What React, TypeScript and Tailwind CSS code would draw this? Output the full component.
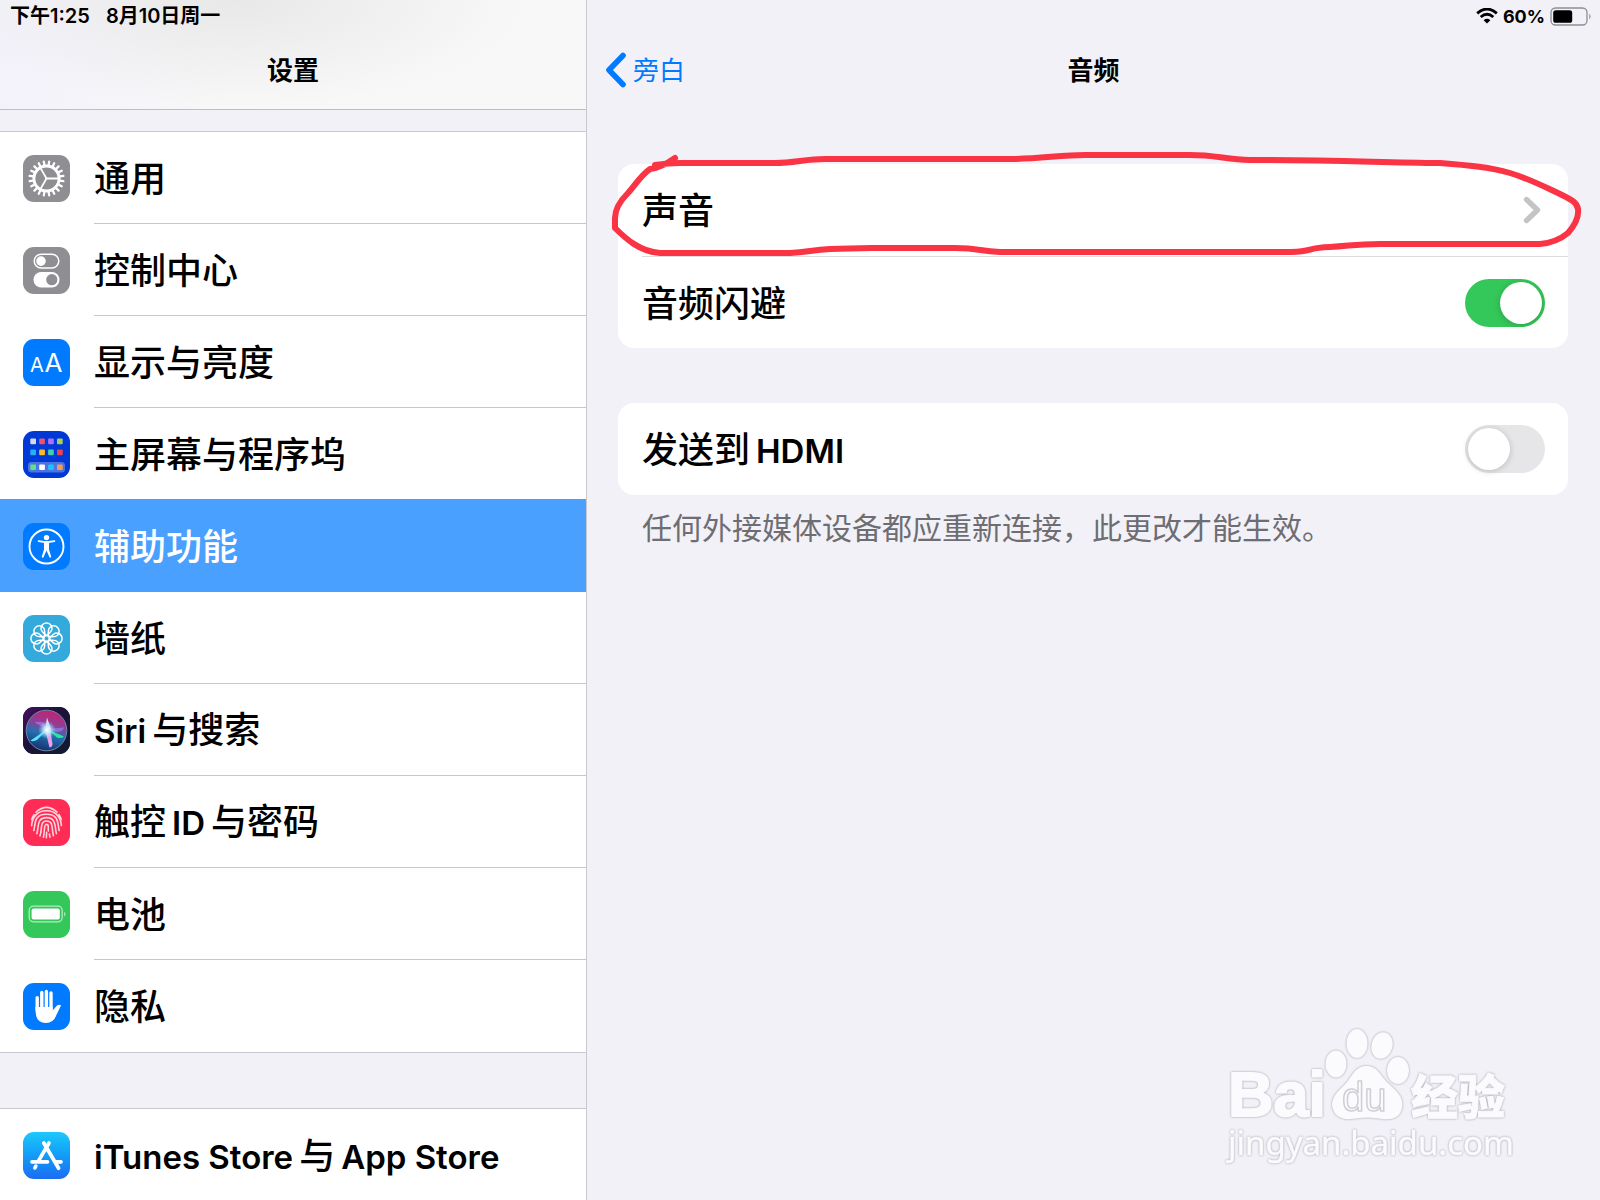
import type { ReactNode } from 'react'
import clsx from 'clsx'

interface IconTileProps {
    className: string
    children: ReactNode
}

interface SettingItem {
    label: string
    icon: ReactNode
    active?: boolean
}

function IconTile({ className, children }: IconTileProps) {
    return (
        <span className={clsx('block size-[47px] rounded-[11px] overflow-hidden', className)}>
            <svg viewBox="0 0 47 47" className="size-full" fill="none" aria-hidden="true">
                {children}
            </svg>
        </span>
    )
}

const around = (count: number) => Array.from({ length: count }, (_, i) => (i * 360) / count)

function GearIcon() {
    return (
        <IconTile className="bg-[#8e8e93]">
            <g stroke="#fff" strokeLinecap="round">
                <circle cx="23.5" cy="23.5" r="12.6" strokeWidth="3" />
                {around(20).map((a) => (
                    <path key={a} d="M36.5 23.5H40.6" strokeWidth="2.3" transform={`rotate(${a + 9} 23.5 23.5)`} />
                ))}
                {around(3).map((a) => (
                    <path key={a} d="M23.5 23.5H36" strokeWidth="1.8" transform={`rotate(${a} 23.5 23.5)`} />
                ))}
            </g>
        </IconTile>
    )
}

function ControlCenterIcon() {
    return (
        <IconTile className="bg-[#8e8e93]">
            <rect x="11.2" y="7.2" width="24.6" height="13.8" rx="6.9" stroke="#fff" strokeWidth="1.5" />
            <circle cx="18" cy="14.1" r="4.8" fill="#fff" />
            <rect x="10.5" y="25" width="26" height="15.4" rx="7.7" fill="#fff" />
            <circle cx="28.8" cy="32.7" r="5.6" fill="#8e8e93" />
        </IconTile>
    )
}

function DisplayIcon() {
    return (
        <IconTile className="bg-[#007aff]">
            <g fill="#fff" fontFamily="Inter, sans-serif">
                <text x="7" y="33" fontSize="20">A</text>
                <text x="21.5" y="33" fontSize="26">A</text>
            </g>
        </IconTile>
    )
}

const appColors = [
    ['#d5dbe6', '#f0506e', '#b070f8', '#a6d05a'],
    ['#1fb4f5', '#fdbb1c', '#3fd0b0', '#f04444'],
    ['#5fe37c', '#ffffff', '#1cc4f8', '#f99a4c'],
]

function HomeScreenIcon() {
    return (
        <IconTile className="bg-[#0039d6]">
            <rect x="5" y="31" width="37" height="10.5" rx="3.5" fill="#4c74e4" />
            {appColors.map((row, r) =>
                row.map((color, c) => (
                    <rect key={color} x={7.3 + c * 8.9} y={[7.6, 18.6, 33.4][r]} width="5.7" height="5.7" rx="1" fill={color} />
                )),
            )}
        </IconTile>
    )
}

function AccessibilityIcon() {
    return (
        <IconTile className="bg-[#007aff]">
            <circle cx="23.5" cy="23.5" r="17" stroke="#fff" strokeWidth="1.9" />
            <circle cx="23.5" cy="14.6" r="2.7" fill="#fff" />
            <path d="M15.6 18.2 21.4 19H25.6L31.4 18.2" stroke="#fff" strokeWidth="1.8" strokeLinecap="round" />
            <path d="M21 18.6H26V26.5L28.2 33.6Q28 35.2 26.6 34.4L23.5 27.5 20.4 34.4Q19 35.2 18.8 33.6L21 26.5Z" fill="#fff" />
        </IconTile>
    )
}

function WallpaperIcon() {
    return (
        <IconTile className="bg-[#34aadc]">
            <g stroke="#fff" strokeWidth="1.5">
                {around(8).map((a) => (
                    <path
                        key={a}
                        d="M23.5 20.6C21.5 18.9 18 16.6 18 13.4A5.5 5.5 0 0 1 29 13.4C29 16.6 25.5 18.9 23.5 20.6Z"
                        transform={`rotate(${a} 23.5 23.5)`}
                    />
                ))}
                <circle cx="23.5" cy="23.5" r="2.9" />
            </g>
        </IconTile>
    )
}

function SiriIcon() {
    return (
        <IconTile className="bg-[#16133a]">
            <defs>
                <linearGradient id="siri-bg" x1="0" y1="0" x2="1" y2="1">
                    <stop offset="0" stopColor="#46105f" />
                    <stop offset=".45" stopColor="#1c1238" />
                    <stop offset="1" stopColor="#101c30" />
                </linearGradient>
                <linearGradient id="siri-orb" x1=".65" y1="0" x2=".4" y2="1">
                    <stop offset="0" stopColor="#c81f6c" />
                    <stop offset=".35" stopColor="#8d4098" />
                    <stop offset=".6" stopColor="#2470b0" />
                    <stop offset="1" stopColor="#17306e" />
                </linearGradient>
                <radialGradient id="siri-glow">
                    <stop offset="0" stopColor="#fff" />
                    <stop offset=".4" stopColor="#c8f4ff" stopOpacity=".8" />
                    <stop offset="1" stopColor="#7fd8ff" stopOpacity="0" />
                </radialGradient>
            </defs>
            <rect width="47" height="47" fill="url(#siri-bg)" />
            <circle cx="23.5" cy="23.5" r="20.3" fill="url(#siri-orb)" stroke="#6f8aa8" strokeWidth="1" />
            <path d="M24 22 41 29.5Q38 32 34 30.500Z" fill="#2fe0a4" />
            <path d="M24 22 41 20.5Q40 25 33 25Z" fill="#8c7ae8" opacity=".8" />
            <path d="M26 21 7.5 33.5Q10 35 14 33Z" fill="#5ae2ff" />
            <path d="M24 22 11.5 15.5Q20 13 27 20Z" fill="#b06ad8" opacity=".8" />
            <path d="M22 22 26.500 40.500Q29.500 40 29.500 37L27 22Z" fill="#f0a0e8" />
            <path d="M22 23 24 10.500 28 22Z" fill="#fff" opacity=".8" />
            <circle cx="24" cy="23" r="9" fill="url(#siri-glow)" />
        </IconTile>
    )
}

function TouchIdIcon() {
    return (
        <IconTile className="bg-[#ff2d55]">
            <g stroke="#ffd5dd" strokeWidth="1.6" strokeLinecap="round">
                <path d="M13 13.2Q23.5 3.6 34 13.2" />
                <path d="M8.8 20.5Q9.4 18 11 15.7M38.2 20.5Q37.6 18 36 15.7" />
                <path d="M8.6 26.8C9 19 13.5 11.8 23.5 11.8S38 19 38.4 26.8" />
                <path d="M10.8 31.5C12.6 25 10.6 15.2 23.5 15.2S34.4 25 36.2 31.5" />
                <path d="M13.8 34.6C16 29 13.2 18.6 23.5 18.6S31.8 29 33.4 34.6" />
                <path d="M17 36.8C19.4 31 16.6 22 23.5 22S28.4 28 30.4 36.6" />
                <path d="M20.4 38.2C22 33 20.4 25.4 23.5 25.4S24.6 29 25.4 32M26.4 35 27 38.2M23.6 33.4 23.4 38.8" />
            </g>
        </IconTile>
    )
}

function BatteryTileIcon() {
    return (
        <IconTile className="bg-[#34c759]">
            <rect x="6.2" y="15.2" width="33" height="15.6" rx="4.2" stroke="#b4ebc1" strokeWidth="1.3" />
            <rect x="8.6" y="17.6" width="28.2" height="10.8" rx="2" fill="#fff" />
            <path d="M41.2 20.4Q43.8 23 41.2 25.6Z" fill="#b4ebc1" />
        </IconTile>
    )
}

function PrivacyIcon() {
    return (
        <IconTile className="bg-[#007aff]">
            <g stroke="#fff" strokeWidth="3.4" strokeLinecap="round">
                <path d="M14.2 14.6V28M18.8 9.4V26M23.4 8.4V26M28 10V26" />
            </g>
            <path
                d="M12.5 24H29.7V27.4L34 22.6Q36.6 20.8 38 22.6L33.4 32Q30.6 40 23 40 13.6 40 12.8 30.6Z"
                fill="#fff"
            />
        </IconTile>
    )
}

function AppStoreIcon() {
    return (
        <IconTile className="bg-linear-to-b from-[#1fc8fb] to-[#1d6cf2]">
            <g stroke="#fff" strokeWidth="3.7" strokeLinecap="round">
                <path d="M26 11 15.8 28.4M12.8 34.2 11.9 35.8M20.8 11 35.6 36.2" />
                <path d="M9 29.8H24.5M32.6 29.8H38" />
            </g>
        </IconTile>
    )
}

const mainItems: SettingItem[] = [
    { label: '通用', icon: <GearIcon /> },
    { label: '控制中心', icon: <ControlCenterIcon /> },
    { label: '显示与亮度', icon: <DisplayIcon /> },
    { label: '主屏幕与程序坞', icon: <HomeScreenIcon /> },
    { label: '辅助功能', icon: <AccessibilityIcon />, active: true },
    { label: '墙纸', icon: <WallpaperIcon /> },
    { label: 'Siri与搜索', icon: <SiriIcon /> },
    { label: '触控ID与密码', icon: <TouchIdIcon /> },
    { label: '电池', icon: <BatteryTileIcon /> },
    { label: '隐私', icon: <PrivacyIcon /> },
]

const storeItems: SettingItem[] = [{ label: 'iTunes Store与App Store', icon: <AppStoreIcon /> }]

// Latin runs are set a little smaller and heavier than the Chinese around them
function MixedText({ text }: { text: string }) {
    return (
        <span className="pt-[2px] flex items-baseline gap-[6px] text-[36px] leading-[44px] font-medium whitespace-nowrap">
            {text
                .split(/([A-Za-z ]+)/)
                .filter(Boolean)
                .map((part) => (
                    <span key={part} className={clsx(/[A-Za-z]/.test(part) && 'text-[33px] font-semibold')}>
                        {part}
                    </span>
                ))}
        </span>
    )
}

function SettingRow({ label, icon, active }: SettingItem) {
    return (
        <li className="group">
            <a
                href="#"
                aria-current={active ? 'page' : undefined}
                className={clsx('flex items-center', active && 'relative -mt-px pt-px bg-[#4aa0ff] text-white')}
            >
                <span className="w-[94px] shrink-0 pl-[23px]">{icon}</span>
                <span
                    className={clsx(
                        'flex-1 h-[92px] flex items-center border-b group-last:border-b-0',
                        active ? 'border-transparent' : 'border-[#c9c9cd]',
                    )}
                >
                    <MixedText text={label} />
                </span>
            </a>
        </li>
    )
}

function SettingGroup({ items }: { items: SettingItem[] }) {
    return (
        <ul className="bg-white border-y border-[#c9c9cd]">
            {items.map((item) => (
                <SettingRow key={item.label} {...item} />
            ))}
        </ul>
    )
}

function Switch({ id, defaultChecked }: { id: string; defaultChecked?: boolean }) {
    return (
        <input
            id={id}
            type="checkbox"
            role="switch"
            defaultChecked={defaultChecked}
            className="appearance-none flex items-center w-20 h-12 px-[3px] rounded-full bg-[#e6e6e8] checked:bg-[#34c759] checked:justify-end before:block before:size-[42px] before:rounded-full before:bg-white before:shadow-[0_1px_6px_rgba(0,0,0,0.2)]"
        />
    )
}

function StatusIndicators() {
    return (
        <div className="h-8 pr-2 flex items-center justify-end gap-[5px] text-[18px] font-bold">
            <svg width="22" height="16" viewBox="0 0 22 16" fill="none" stroke="#000" strokeWidth="2.9" aria-hidden="true">
                <path d="M1.200 5.400Q11-3.200 20.800 5.400" />
                <path d="M4.700 9Q11 3.600 17.300 9" />
                <path d="M11 15.600 7.600 12.200Q11 9.400 14.400 12.200Z" fill="#000" stroke="none" />
            </svg>
            <span>60%</span>
            <svg width="42" height="19" viewBox="0 0 42 19" fill="none" aria-hidden="true">
                <rect x="1" y="1" width="36" height="17" rx="4.5" stroke="#8e8e92" strokeWidth="1.3" />
                <rect x="3.2" y="3.2" width="19" height="12.6" rx="2.6" fill="#000" />
                <path d="M39.3 6.6Q42 9.5 39.3 12.4Z" fill="#8e8e92" />
            </svg>
        </div>
    )
}

function MarkerStroke() {
    return (
        <svg
            viewBox="602 149 982 110"
            preserveAspectRatio="none"
            className="absolute -top-4 -left-4 w-[calc(100%+32px)] h-[110px] pointer-events-none"
            fill="none"
            aria-hidden="true"
        >
            <path
                d="M675 159C668 164 658 169 650 170C640 177 634 188 628 194C619 203 615 211 615 219V229C625 239 640 253 660 254H790C808 253 812 251 830 250C850 250 850 249 872 249H955C980 249 978 252 1000 253H1291C1315 252 1305 249 1330 248C1350 247 1355 245 1380 245H1540C1552 244 1562 239 1568 234C1575 226 1579 217 1578 210C1577 203 1570 200 1560 195C1545 188 1530 180 1510 174C1490 168 1465 166 1440 164C1370 163 1330 161 1250 161C1225 160 1215 156 1190 156H1085C1060 156 1040 160 1010 160H825C805 160 795 164 775 164H680C672 164 662 165 655 166"
                stroke="#fa3345"
                strokeWidth="6"
                strokeLinecap="round"
                strokeLinejoin="round"
            />
        </svg>
    )
}

function Watermark() {
    return (
        <svg
            viewBox="0 0 300 150"
            className="absolute right-20 bottom-7 w-[300px] h-[150px] pointer-events-none drop-shadow-[0_0_1px_#9c9ca4]"
            fill="#fbfbfe"
            stroke="#fbfbfe"
            strokeWidth="1.5"
            strokeLinejoin="round"
        >
            <text x="8" y="94" fontSize="63" fontWeight="700" fontFamily="'Liberation Sans', sans-serif" strokeWidth="2">
                Bai
            </text>
            <g stroke="none">
                <ellipse cx="116" cy="42" rx="10.5" ry="13.5" />
                <ellipse cx="137" cy="21.5" rx="10.5" ry="14.5" />
                <ellipse cx="162" cy="23.5" rx="10.5" ry="13.5" transform="rotate(14 162 23.5)" />
                <ellipse cx="178" cy="48.5" rx="11" ry="13.5" />
                <path d="M146.5 44C158 44 160 54 169 62C178 70 184 76 182 86C180 96 172 98 162 97C152 95 142 95 132 97C120 98 113 93 112 83C112 73 120 68 127 60C133 52 136 44 146.5 44Z" />
            </g>
            <text x="122" y="89" fontSize="40" fontFamily="'Liberation Sans', sans-serif" stroke="#cfcfd4">
                du
            </text>
            <text x="191" y="92" fontSize="47" fontWeight="900" fontFamily="'Noto Sans CJK SC', sans-serif" strokeWidth="1">
                经验
            </text>
            <text x="8" y="133" fontSize="33" fontFamily="'Noto Sans', sans-serif" strokeWidth="0.5">
                jingyan.baidu.com
            </text>
        </svg>
    )
}

function Sidebar() {
    return (
        <aside className="w-[587px] shrink-0 border-r border-[#c9c9cd]">
            <header className="h-[110px] border-b border-[#bdbdc2] bg-[radial-gradient(ellipse_50%_100%_at_40%_0,#e8e8e8,transparent),linear-gradient(to_right,#f3f2fb,#f8f8f8_40%)]">
                <div className="h-8 pl-[10px] flex items-center gap-4 text-[20px] font-semibold">
                    <span>下午1:25</span>
                    <span>8月10日周一</span>
                </div>
                <h1 className="h-[78px] text-center text-[26px] leading-[78px] font-bold">设置</h1>
            </header>
            <nav className="pt-[21px] flex flex-col gap-[55px]">
                <SettingGroup items={mainItems} />
                <SettingGroup items={storeItems} />
            </nav>
        </aside>
    )
}

function AudioPage() {
    return (
        <main className="relative flex-1 min-w-0">
            <StatusIndicators />
            <header className="h-[76px] px-[18px] grid grid-cols-[1fr_auto_1fr] items-center text-[26px]">
                <button className="justify-self-start flex items-center gap-[6px] text-[#007aff]">
                    <svg width="22" height="36" viewBox="0 0 22 36" fill="none" stroke="currentColor" aria-hidden="true">
                        <path d="M18 3.500 4 18 18 32.500" strokeWidth="5.600" strokeLinecap="round" strokeLinejoin="round" />
                    </svg>
                    旁白
                </button>
                <h2 className="font-bold">音频</h2>
            </header>

            <div className="pt-14 pl-[31px] pr-8">
                <section className="relative rounded-2xl bg-white">
                    <button className="w-full pl-6 pr-[27px] h-[92px] flex items-center justify-between">
                        <MixedText text="声音" />
                        <svg width="18" height="28" viewBox="0 0 18 28" fill="none" aria-hidden="true">
                            <path d="M3.500 3.500 14.500 14 3.500 24.500" stroke="#c4c4c7" strokeWidth="5.400" strokeLinecap="round" strokeLinejoin="round" />
                        </svg>
                    </button>
                    <div className="ml-6 pr-[23px] h-[92px] flex items-center justify-between border-t border-[#dcdcdf]">
                        <label htmlFor="ducking">
                            <MixedText text="音频闪避" />
                        </label>
                        <Switch id="ducking" defaultChecked />
                    </div>
                    <MarkerStroke />
                </section>

                <section className="mt-[55px] pl-6 pr-[23px] h-[92px] flex items-center justify-between rounded-2xl bg-white">
                    <label htmlFor="hdmi">
                        <MixedText text="发送到HDMI" />
                    </label>
                    <Switch id="hdmi" />
                </section>
                <p className="pl-6 pt-[10px] text-[30px] leading-[46px] text-[#6d6d72]">
                    任何外接媒体设备都应重新连接，此更改才能生效。
                </p>
            </div>

            <Watermark />
        </main>
    )
}

export default function App() {
    return (
        <div
            lang="zh-CN"
            className="flex h-screen overflow-hidden bg-[#f2f1f8] text-black font-[Inter,'Noto_Sans_CJK_SC',sans-serif]"
        >
            <Sidebar />
            <AudioPage />
        </div>
    )
}
